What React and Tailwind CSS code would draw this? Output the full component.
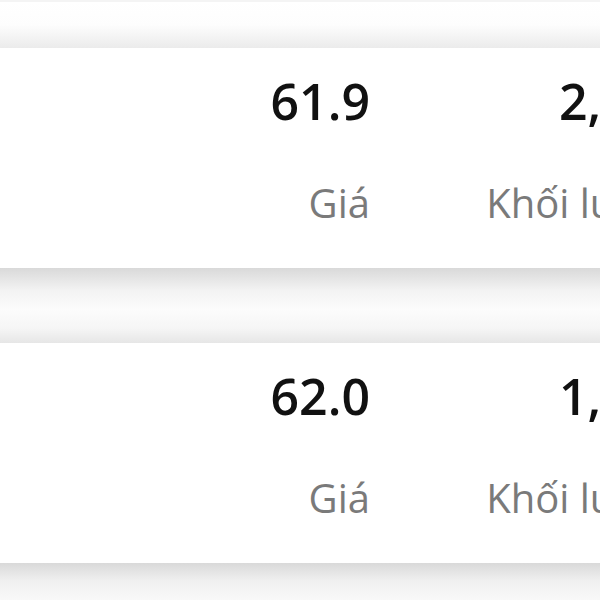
import React from 'react';

const rows = [
  { price: '61.9', volume: '2,318' },
  { price: '62.0', volume: '1,905' },
];

const Gap = ({ className }) => <div className={className} />;

export default function App() {
  return (
    <div className="w-[600px] h-[600px] overflow-hidden bg-white font-['Open_Sans',sans-serif]">
      <Gap className="h-[48px] border-t-2 border-[#f4f4f4] bg-gradient-to-b from-white via-[#fdfdfd] to-[#ebebeb]" />
      {rows.map((row, i) => (
        <React.Fragment key={i}>
          <div className="h-[220px] bg-white flex w-[720px] flex-none">
            <div className="w-[370px] flex-none flex flex-col items-end pt-[28px]">
              <span className="text-[50px] font-semibold leading-none text-[#111]">{row.price}</span>
              <span className="mt-[57px] text-[40px] leading-none text-[#7a7a7a]">Giá</span>
            </div>
            <div className="w-[317px] flex-none flex flex-col items-end pt-[28px]">
              <span className="text-[50px] font-semibold leading-none text-[#111]">{row.volume}</span>
              <span className="mt-[57px] text-[40px] leading-none text-[#7a7a7a]">Khối lượng</span>
            </div>
          </div>
          {i === 0 ? (
            <Gap className="h-[75px] bg-[linear-gradient(to_bottom,#d9d9d9_0%,#f3f3f3_30%,#fcfcfc_55%,#f6f6f6_80%,#e6e6e6_100%)]" />
          ) : (
            <Gap className="h-[40px] bg-[linear-gradient(to_bottom,#d9d9d9_0%,#f0f0f0_45%,#fafafa_100%)]" />
          )}
        </React.Fragment>
      ))}
    </div>
  );
}
